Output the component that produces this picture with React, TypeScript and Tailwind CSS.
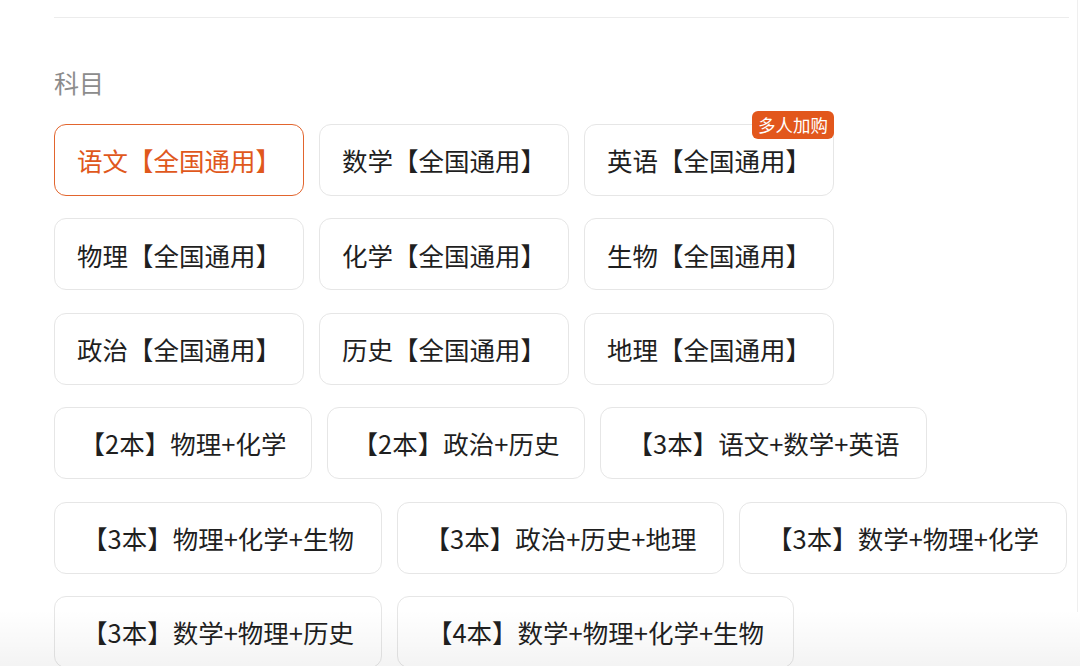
import React from 'react'

type Subject = { label: string; width: string; selected?: boolean; badge?: string }

const subjects: Subject[] = [
  { label: '语文【全国通用】', width: 'w-[250px]', selected: true },
  { label: '数学【全国通用】', width: 'w-[250px]' },
  { label: '英语【全国通用】', width: 'w-[250px]', badge: '多人加购' },
  { label: '物理【全国通用】', width: 'w-[250px]' },
  { label: '化学【全国通用】', width: 'w-[250px]' },
  { label: '生物【全国通用】', width: 'w-[250px]' },
  { label: '政治【全国通用】', width: 'w-[250px]' },
  { label: '历史【全国通用】', width: 'w-[250px]' },
  { label: '地理【全国通用】', width: 'w-[250px]' },
  { label: '【2本】物理+化学', width: 'w-[258px]' },
  { label: '【2本】政治+历史', width: 'w-[258px]' },
  { label: '【3本】语文+数学+英语', width: 'w-[327px]' },
  { label: '【3本】物理+化学+生物', width: 'w-[328px]' },
  { label: '【3本】政治+历史+地理', width: 'w-[327px]' },
  { label: '【3本】数学+物理+化学', width: 'w-[328px]' },
  { label: '【3本】数学+物理+历史', width: 'w-[328px]' },
  { label: '【4本】数学+物理+化学+生物', width: 'w-[397px]' },
]

function SubjectButton({ item }: { item: Subject }) {
  return (
    <button
      className={
        'relative h-[72px] flex items-center justify-center rounded-[12px] bg-white text-[25.5px] leading-none ' +
        item.width +
        (item.selected
          ? ' border-[1.5px] border-[#e2652e] text-[#e0581c]'
          : ' border border-[#e6e6e6] text-[#1f1f1f]')
      }
    >
      {item.label}
      {item.badge && (
        <span className="absolute right-[-1px] top-[-14px] h-[28px] px-[6px] flex items-center rounded-[6px] bg-[#e2571c] text-white text-[17.5px] leading-none">
          {item.badge}
        </span>
      )}
    </button>
  )
}

export default function App() {
  return (
    <div
      className="relative w-[1080px] h-[666px] bg-white overflow-hidden"
      style={{ fontFamily: '"Noto Sans CJK SC", "Noto Sans", sans-serif' }}
    >
      <div className="w-[1078px] h-[612px] border-r border-[#efefef] pl-[54px] pr-[8px]">
        <div className="h-[18px] border-b border-[#ececec]" />
        <div className="mt-[48px] text-[25px] leading-[32px] text-[#8c8c8c]">科目</div>
        <div className="mt-[26px] flex flex-wrap gap-x-[15px] gap-y-[22.4px]">
          {subjects.map((s) => (
            <SubjectButton key={s.label} item={s} />
          ))}
        </div>
      </div>
      <div className="absolute left-0 right-0 bottom-0 h-[56px] bg-linear-to-b from-black/0 to-black/[0.045]" />
    </div>
  )
}
